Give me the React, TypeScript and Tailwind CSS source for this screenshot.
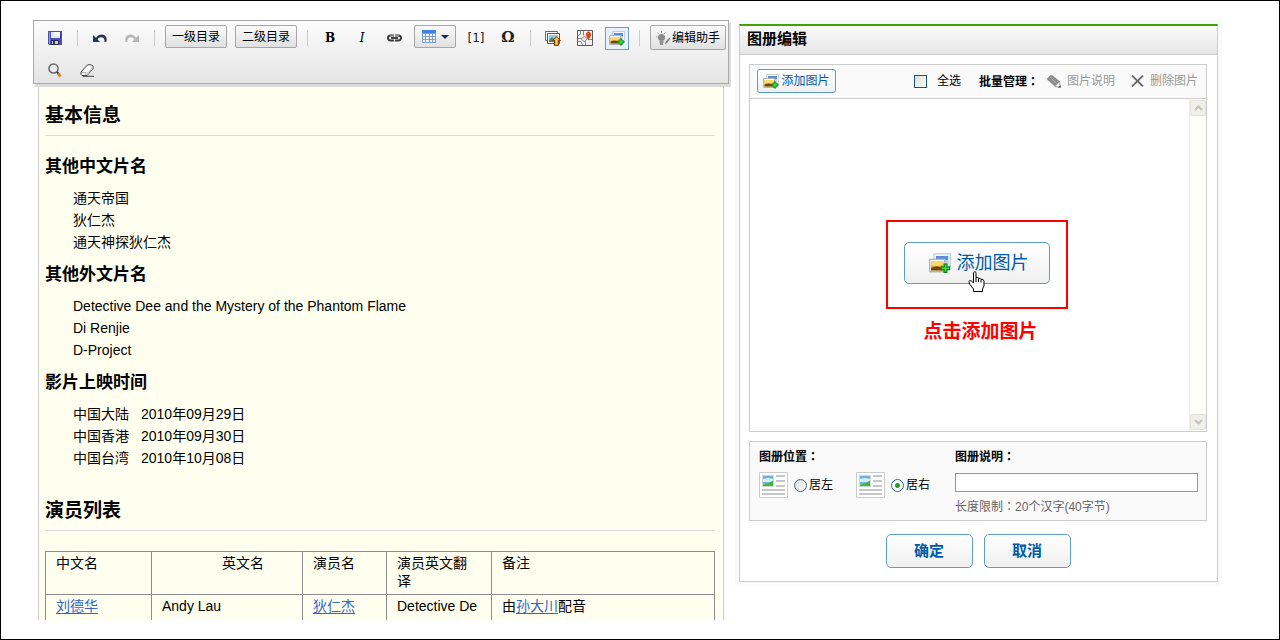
import { useState } from 'react'
import type { ReactNode } from 'react'

/* ---------- icons ---------- */

function SaveIcon() {
  return (
    <svg width="14" height="14" viewBox="0 0 14 14" aria-hidden="true">
      <path d="M0 0h14v14H1l-1-1z" fill="#4a50b4" />
      <path d="M1 1h1v12H1z" fill="#8f98ea" />
      <path d="M3 1h9v6H3z" fill="#dcebf8" />
      <path d="M6 1h6v4H8z" fill="#fff" />
      <path d="M12 1h1v7h-1z" fill="#3a3d94" />
      <path d="M3 9h8v5H3z" fill="#2a2c5c" />
      <path d="M4 10h6v3H4z" fill="#c9cad6" />
      <path d="M5 10h2v3H5z" fill="#333" />
    </svg>
  )
}

function UndoIcon({ flipped }: { flipped?: boolean }) {
  return (
    <svg
      width="14"
      height="9"
      viewBox="0 0 14 9"
      className={flipped ? '-scale-x-100' : ''}
      aria-hidden="true"
    >
      <path
        d="M0 1v7h7L4.6 5.6C5.5 3.9 7 3 8.8 3.3c2 .3 3 2.200 2.700 4.700l1.800 0C14.600 4.200 12.800.700 9.200.400 6.600.200 4.300 1.400 3 3.800z"
        fill={flipped ? '#b5b5b5' : '#26344d'}
      />
    </svg>
  )
}

function LinkIcon() {
  return (
    <svg width="15" height="8" viewBox="0 0 15 8" fill="none" aria-hidden="true">
      <path
        d="M7 1.500H3.500a2.500 2.500 0 0 0 0 5H7M8 1.500h3.500a2.500 2.500 0 0 1 0 5H8"
        stroke="#3a3a3a"
        strokeWidth="2"
      />
      <path d="M4 4h7" stroke="#444" strokeWidth="2" />
      <path d="M3 1.500h4M8 1.500h4" stroke="#aaa" strokeWidth=".7" />
    </svg>
  )
}

function TableIcon() {
  return (
    <svg width="14" height="13" viewBox="0 0 14 13" aria-hidden="true">
      <path d="M0 0h14v13H0z" fill="#7b9fd4" />
      <path d="M0 0h14v3H0z" fill="#3f7fe6" />
      <path
        d="M1 4h2v2H1zM4 4h3v2H4zM8 4h2v2H8zM11 4h2v2h-2zM1 7h2v2H1zM4 7h3v2H4zM8 7h2v2H8zM11 7h2v2h-2zM1 10h2v2H1zM4 10h3v2H4zM8 10h2v2H8zM11 10h2v2h-2z"
        fill="#f4f8fe"
      />
    </svg>
  )
}

function UploadImageIcon() {
  return (
    <svg width="16" height="15" viewBox="0 0 16 15" aria-hidden="true">
      <path d="M.5.500h12v9H.5z" fill="#fff" stroke="#666" />
      <path d="M2.500 2.500h12v10h-12z" fill="#fff" stroke="#555" />
      <path d="M4 4h9v7H4z" fill="#8fc8f4" />
      <path d="M4 9l3-3 2 2 1-1v4H4z" fill="#3d8a6c" />
      <path d="M11.500 5.500l4 4h-2V14.500h-4V9.500h-2z" fill="#fba51a" stroke="#7a4300" />
      <path d="M11.500 7.200v6" stroke="#ffd56a" />
    </svg>
  )
}

function MapIcon() {
  return (
    <svg width="16" height="16" viewBox="0 0 16 16" fill="none" aria-hidden="true">
      <path d="M.5.500h15v15H.5z" fill="#f3f3f3" stroke="#5a5a5a" />
      <path d="M6.500 1v4.500M1 8.500h4M8.500 11v4M11 9.500h4M3.500 1v3l-2.500 2" stroke="#888" />
      <path d="M4.500 8.500l3-2 3 2-3 3-3-2zM1 11.500h3l1.500 3.500" stroke="#888" />
      <path d="M11.500 10.500L9.300 6a2.700 2.700 0 1 1 4.400 0z" fill="#e0411a" />
      <path d="M10.500 3.500h1.500" stroke="#ff9c7a" />
    </svg>
  )
}

/** Stacked photos with a green plus, drawn on a 16px grid. */
function AddImageIcon({ big }: { big?: boolean }) {
  return (
    <svg
      width={big ? 22 : 16}
      height={big ? 21 : 15}
      viewBox="0 0 16 15"
      aria-hidden="true"
    >
      <path d="M3.500.500h12v9h-12z" fill="#fff" stroke="#c0d0da" />
      <path d="M5 2h9v6H5z" fill="#5b8fdc" />
      <path d="M5 5h9v3H5z" fill="#b7d6ee" />
      <path d="M.5 4.500h11v9H.5z" fill="#fff" stroke="#b4b4b4" />
      <path d="M1.500 6h9v6.500h-9z" fill="#e6a81e" />
      <path d="M1.500 6h9v2l-3 1.500-6-.5z" fill="#f9d971" />
      <path d="M1.500 10.500l4-1 5 1v2h-9z" fill="#6b4710" />
      <path
        d="M11 8h2v2h2v2h-2v2h-2v-2H9v-2h2z"
        fill="#3fdc3f"
        stroke="#12831a"
        strokeWidth=".9"
      />
    </svg>
  )
}

function HelperIcon() {
  return (
    <svg width="14" height="14" viewBox="0 0 14 14" fill="none" aria-hidden="true">
      <circle cx="5.500" cy="6.500" r="3.500" fill="#8a8a8a" />
      <path d="M3.500 11h4M4 13h3" stroke="#777" strokeWidth="1.500" />
      <path d="M5.500 0v2M1.500 1.500l1.300 1.300M9.500 1.500L8.200 2.800M0 6h1.500" stroke="#999" />
      <path d="M13.500 6.500L9.500 11 9 13l1.800-.7 3.200-4.300z" fill="#777" />
    </svg>
  )
}

function SearchIcon() {
  return (
    <svg width="14" height="15" viewBox="0 0 14 15" fill="none" aria-hidden="true">
      <circle cx="5.500" cy="5.500" r="4.500" fill="#e9edf0" stroke="#666" strokeWidth="1.500" />
      <path d="M9 9l1.500 1.500" stroke="#333" strokeWidth="2" />
      <path d="M10 10.500l2.500 3" stroke="#d98618" strokeWidth="2.800" />
    </svg>
  )
}

function EraserIcon() {
  return (
    <svg width="15" height="13" viewBox="0 0 15 13" fill="none" aria-hidden="true">
      <path d="M1 8L7.500.800h4l1.500 1.500v2.500L7 11.500H2L1 10.500z" fill="#fff" stroke="#444" />
      <path d="M6.500 9.500l6-6.500v2L7 11.200z" fill="#c4c4c4" />
      <path d="M1.500 8.500H6v2.500" stroke="#aaa" />
      <path d="M3 12.300h11" stroke="#444" />
    </svg>
  )
}

function PencilIcon() {
  return (
    <svg width="14" height="13" viewBox="0 0 14 13" aria-hidden="true">
      <path d="M0 3.500L3.500 0H5l7.500 6L8 11.500.5 5z" fill="#8c8c8c" />
      <path d="M3 2l6.500 6.500" stroke="#b0b0b0" fill="none" />
      <path d="M8 11.500l4.500-5.500 1 6.500z" fill="#eee" stroke="#888" strokeWidth=".7" />
      <path d="M11 12.500h2.500V10z" fill="#444" />
    </svg>
  )
}

function DeleteIcon() {
  return (
    <svg width="13" height="12" viewBox="0 0 13 12" fill="none" aria-hidden="true">
      <path d="M1 .500L12 11.500M12 .500L1 11.500" stroke="#6a6a6a" strokeWidth="1.800" />
    </svg>
  )
}

function LayoutIcon() {
  return (
    <svg width="29" height="26" viewBox="0 0 29 26" aria-hidden="true">
      <path d="M.5.500h28v25H.5z" fill="#fff" stroke="#ccc" />
      <path d="M3 3h12v12H3z" fill="#d0d8dc" />
      <path d="M4 4h10v8H4z" fill="#6fb4dc" />
      <path d="M4 7l5-1 5 1v3H4z" fill="#d8eefa" />
      <path d="M4 12.500l5-1 5-3V14H4z" fill="#3fb73f" />
      <path d="M17 3h9v2h-9zM17 8h9v2h-9zM17 13h9v2h-9zM3 17h23v2H3zM3 21h23v2H3z" fill="#c6c6c6" />
    </svg>
  )
}

function HandCursor() {
  return (
    <svg
      width="17"
      height="22"
      viewBox="0 0 17 22"
      className="absolute top-[29px] left-16"
      aria-hidden="true"
    >
      <path
        d="M5.500 1.500q1.500-2 2.500 0v5q2-1 2.500.800 2-.500 2.500 1 2.500-.500 3 1.700v5l-1.500 3v2.500H5.500v-2.500L2 13.500.800 10.500q.7-2 2.700-.500l2 2z"
        fill="#fff"
        stroke="#000"
      />
      <path d="M8 6.500v4.500M10.500 7.500v3.500M13 8.500v3" stroke="#000" />
    </svg>
  )
}

/* ---------- editor side ---------- */

function Tool({ label, children }: { label: string; children: ReactNode }) {
  return (
    <button
      type="button"
      title={label}
      aria-label={label}
      className="flex h-8 w-8 items-center justify-center text-[#222]"
    >
      {children}
    </button>
  )
}

function Separator() {
  return <span className="mx-1.5 mt-2 h-4 w-px bg-[#ccc]" />
}

const raised =
  'flex items-center justify-center rounded-[2px] border border-[#a6a6a6] bg-linear-to-b from-[#fbfbfb] to-[#e0e0e0]'

function Toolbar() {
  return (
    <div
      role="toolbar"
      className="relative flex flex-wrap items-start border border-[#a9a9a9] bg-linear-to-b from-[#fcfcfc] to-[#e4e4e4] pt-px pl-[5px] shadow-[2px_3px_0_#dcdcdc]"
    >
      <Tool label="保存">
        <SaveIcon />
      </Tool>
      <Separator />
      <Tool label="撤销">
        <UndoIcon />
      </Tool>
      <Tool label="重做">
        <UndoIcon flipped />
      </Tool>
      <Separator />
      <button type="button" className={`${raised} mx-1 mt-[3px] h-[23px] w-[62px]`}>
        一级目录
      </button>
      <button type="button" className={`${raised} mx-1 mt-[3px] h-[23px] w-[62px]`}>
        二级目录
      </button>
      <Separator />
      <Tool label="粗体">
        <b className="font-['DejaVu_Serif',serif] text-xs text-black">B</b>
      </Tool>
      <Tool label="斜体">
        <i className="font-['DejaVu_Serif',serif] text-xs text-black">I</i>
      </Tool>
      <Tool label="链接">
        <LinkIcon />
      </Tool>
      <button
        type="button"
        aria-label="表格"
        className={`${raised} mx-1 mt-[3px] h-[23px] w-[42px] gap-[5px]`}
      >
        <TableIcon />
        <svg width="8" height="4" viewBox="0 0 8 4" aria-hidden="true">
          <path d="M0 0h8L4 4z" fill="#1d2c52" />
        </svg>
      </button>
      <Tool label="参考资料">
        <span className="font-['DejaVu_Sans',sans-serif] text-xs">[1]</span>
      </Tool>
      <Tool label="特殊符号">
        <b className="font-['DejaVu_Serif',serif] text-[15px]">Ω</b>
      </Tool>
      <Separator />
      <Tool label="上传图片">
        <UploadImageIcon />
      </Tool>
      <Tool label="地图">
        <MapIcon />
      </Tool>
      <Tool label="图册">
        <span className="flex h-[23px] w-6 items-center justify-center border border-[#6b9bdc] bg-[#e8f1fb]">
          <AddImageIcon />
        </span>
      </Tool>
      <Separator />
      <button type="button" className={`${raised} ml-1 mt-[3px] h-[25px] w-[76px] gap-0.5`}>
        <HelperIcon />
        编辑助手
      </button>
      <button
        type="button"
        aria-label="查找"
        className="flex h-[29px] w-8 items-center justify-center pt-1"
      >
        <SearchIcon />
      </button>
      <button
        type="button"
        aria-label="清除格式"
        className="flex h-[29px] w-8 items-center justify-center pt-1"
      >
        <EraserIcon />
      </button>
    </div>
  )
}

function SectionTitle({ children }: { children: string }) {
  return (
    <h2 className="border-b border-[#dcdcdc] pb-1 text-[19px] leading-[30px] font-bold">
      {children}
    </h2>
  )
}

function FactList({ title, items }: { title: string; items: string[][] }) {
  return (
    <>
      <h3 className="mt-[9px] text-[17px] leading-[26px] font-bold">{title}</h3>
      <ul className="mt-[7px] pl-7 text-sm leading-[22px]">
        {items.map((parts) => (
          <li key={parts.join()} className="flex gap-3">
            {parts.map((part) => (
              <span key={part}>{part}</span>
            ))}
          </li>
        ))}
      </ul>
    </>
  )
}

const cell = 'border border-[#8c8c8c] pt-0.5 pr-3 pl-2.5 text-left align-top font-normal'
const openCell = 'border-x border-[#8c8c8c] pt-0.5 pl-2.5 align-top'
const entryLink = 'text-[#3366cc] underline underline-offset-2'

function CastTable() {
  return (
    <table className="mt-5 w-full table-fixed border-collapse text-sm leading-[18px]">
      <thead>
        <tr className="h-[43px]">
          <th className={`${cell} w-[106px]`}>中文名</th>
          <th className="w-[151px] border border-[#8c8c8c] pt-0.5 pl-[70px] text-left align-top font-normal">
            英文名
          </th>
          <th className={`${cell} w-[84px]`}>演员名</th>
          <th className={`${cell} w-[105px]`}>演员英文翻译</th>
          <th className={cell}>备注</th>
        </tr>
      </thead>
      <tbody>
        <tr className="h-[25px]">
          <td className={openCell}>
            <a href="#liudehua" className={entryLink}>刘德华</a>
          </td>
          <td className={openCell}>Andy Lau</td>
          <td className={openCell}>
            <a href="#direnjie" className={entryLink}>狄仁杰</a>
          </td>
          <td className={`${openCell} whitespace-nowrap`}>Detective De</td>
          <td className={openCell}>
            由<a href="#sundachuan" className={entryLink}>孙大川</a>配音
          </td>
        </tr>
      </tbody>
    </table>
  )
}

function Editor() {
  return (
    <main>
      <Toolbar />
      <article className="mx-[5px] border-x border-[#ccc] bg-[#ffffef] pt-[17px] pr-2 pl-1.5">
        <SectionTitle>基本信息</SectionTitle>
        <div className="pt-[9px]">
          <FactList
            title="其他中文片名"
            items={[['通天帝国'], ['狄仁杰'], ['通天神探狄仁杰']]}
          />
          <FactList
            title="其他外文片名"
            items={[
              ['Detective Dee and the Mystery of the Phantom Flame'],
              ['Di Renjie'],
              ['D-Project'],
            ]}
          />
          <FactList
            title="影片上映时间"
            items={[
              ['中国大陆', '2010年09月29日'],
              ['中国香港', '2010年09月30日'],
              ['中国台湾', '2010年10月08日'],
            ]}
          />
        </div>
        <div className="pt-[27px]">
          <SectionTitle>演员列表</SectionTitle>
        </div>
        <CastTable />
      </article>
    </main>
  )
}

/* ---------- album side ---------- */

const blueButton =
  'flex items-center justify-center border border-[#5f9dc8] bg-linear-to-b from-white to-[#f0f0f0] text-[#005aab]'

/** Full-width colon that sits in the middle of its square. */
function Colon() {
  return <span className="font-['Noto_Sans_CJK_TC',sans-serif]">：</span>
}

function ScrollArrow({ down }: { down?: boolean }) {
  return (
    <span className="flex h-4 w-4 items-center justify-center rounded-[2px] border border-[#e2e2d8] bg-[#f0f0e8]">
      <svg
        width="9"
        height="6"
        viewBox="0 0 9 6"
        fill="none"
        className={down ? 'rotate-180' : ''}
        aria-hidden="true"
      >
        <path d="M1 5l3.500-3.500L8 5" stroke="#c4c4ba" strokeWidth="2" />
      </svg>
    </span>
  )
}

function Gallery() {
  const [all, setAll] = useState(false)

  return (
    <section className="border border-[#ccc]">
      <div className="flex h-[34px] items-center border-b border-[#ccc] bg-[#fafafa] pr-2 pb-px pl-[7px]">
        <button type="button" className={`${blueButton} h-6 w-[79px] gap-0.5 rounded-[3px]`}>
          <AddImageIcon />
          添加图片
        </button>
        <label className="ml-auto flex items-center gap-2.5">
          <input
            type="checkbox"
            checked={all}
            onChange={(e) => setAll(e.target.checked)}
            className="h-[13px] w-[13px] appearance-none border border-[#1d5281] bg-linear-to-br from-[#dcdcd7] to-white checked:bg-[#1d5281]"
          />
          全选
        </label>
        <b className="ml-[18px]">批量管理<Colon /></b>
        <button type="button" className="ml-2 flex items-center gap-1.5 text-[#999]">
          <PencilIcon />
          图片说明
        </button>
        <button type="button" className="ml-4 flex items-center gap-1.5 text-[#999]">
          <DeleteIcon />
          删除图片
        </button>
      </div>
      <div className="flex min-h-[332px] bg-white">
        <div className="flex flex-1 flex-col items-center pt-[121px] pl-3.5">
          <div className="border-2 border-[#f00] px-4 pt-5 pb-[23px]">
            <div className="relative">
              <button
                type="button"
                className={`${blueButton} h-[42px] w-[146px] gap-1.5 rounded-[5px] pl-1 text-lg`}
              >
                <AddImageIcon big />
                添加图片
              </button>
              <HandCursor />
            </div>
          </div>
          <p className="mt-[11px] pl-2 text-[19px] leading-6 font-bold text-[#f00]">点击添加图片</p>
        </div>
        <div className="flex w-[17px] flex-col justify-between border-l border-[#eeeee5] bg-[#fefefb] py-px">
          <ScrollArrow />
          <ScrollArrow down />
        </div>
      </div>
    </section>
  )
}

type SideOptionProps = {
  label: string
  value: string
  side: string
  onPick: (value: string) => void
}

function SideOption({ label, value, side, onPick }: SideOptionProps) {
  return (
    <label className="flex items-center">
      <LayoutIcon />
      <input
        type="radio"
        name="side"
        value={value}
        checked={side === value}
        onChange={() => onPick(value)}
        className="ml-1.5 mr-0.5 h-[13px] w-[13px] appearance-none rounded-full border border-[#3a6593] bg-linear-to-br from-[#dcdcd7] to-white checked:bg-[radial-gradient(circle,#21a121_0_2px,#fff_3px)]"
      />
      {label}
    </label>
  )
}

function AlbumSettings() {
  const [side, setSide] = useState('right')

  return (
    <section className="mt-[9px] flex h-20 border border-[#ccc] bg-[#fafafa] pt-[5px] pr-2 pl-[9px] leading-[18px]">
      <fieldset className="w-[196px] shrink-0">
        <legend className="font-bold">图册位置<Colon /></legend>
        <div className="mt-1.5 flex gap-[23px]">
          <SideOption label="居左" value="left" side={side} onPick={setSide} />
          <SideOption label="居右" value="right" side={side} onPick={setSide} />
        </div>
      </fieldset>
      <div className="flex flex-1 flex-col">
        <label htmlFor="album-note" className="font-bold">图册说明<Colon /></label>
        <input
          id="album-note"
          type="text"
          maxLength={40}
          className="mt-[7px] h-[19px] w-full border border-[#7f9db9] bg-white px-1"
        />
        <p className="mt-[5px] text-[#666]">长度限制<Colon />20个汉字(40字节)</p>
      </div>
    </section>
  )
}

function AlbumPanel() {
  return (
    <aside className="mt-1 self-start border border-t-2 border-[#ccc] border-t-[#44a304] bg-white shadow-[0_0_0_4px_#fafafa]">
      <h1 className="border-b border-[#ccc] bg-linear-to-b from-[#fbfbfb] to-[#e6e6e6] pb-0.5 pl-[7px] text-[15px] leading-[26px] font-bold">
        图册编辑
      </h1>
      <div className="pt-[9px] pr-2.5 pb-[13px] pl-[9px]">
        <Gallery />
        <AlbumSettings />
        <div className="mt-[13px] flex justify-center gap-[11px]">
          <button type="button" className={`${blueButton} h-[34px] w-[87px] rounded-[5px] text-[15px] font-bold`}>
            确定
          </button>
          <button type="button" className={`${blueButton} h-[34px] w-[87px] rounded-[5px] text-[15px] font-bold`}>
            取消
          </button>
        </div>
      </div>
    </aside>
  )
}

export default function App() {
  return (
    <div className="grid min-h-screen grid-cols-[696fr_479fr] gap-2.5 border border-black bg-white pt-[19px] pr-[61px] pb-[19px] pl-8 font-['Liberation_Sans','Noto_Sans_CJK_SC',sans-serif] text-xs text-black">
      <Editor />
      <AlbumPanel />
    </div>
  )
}
